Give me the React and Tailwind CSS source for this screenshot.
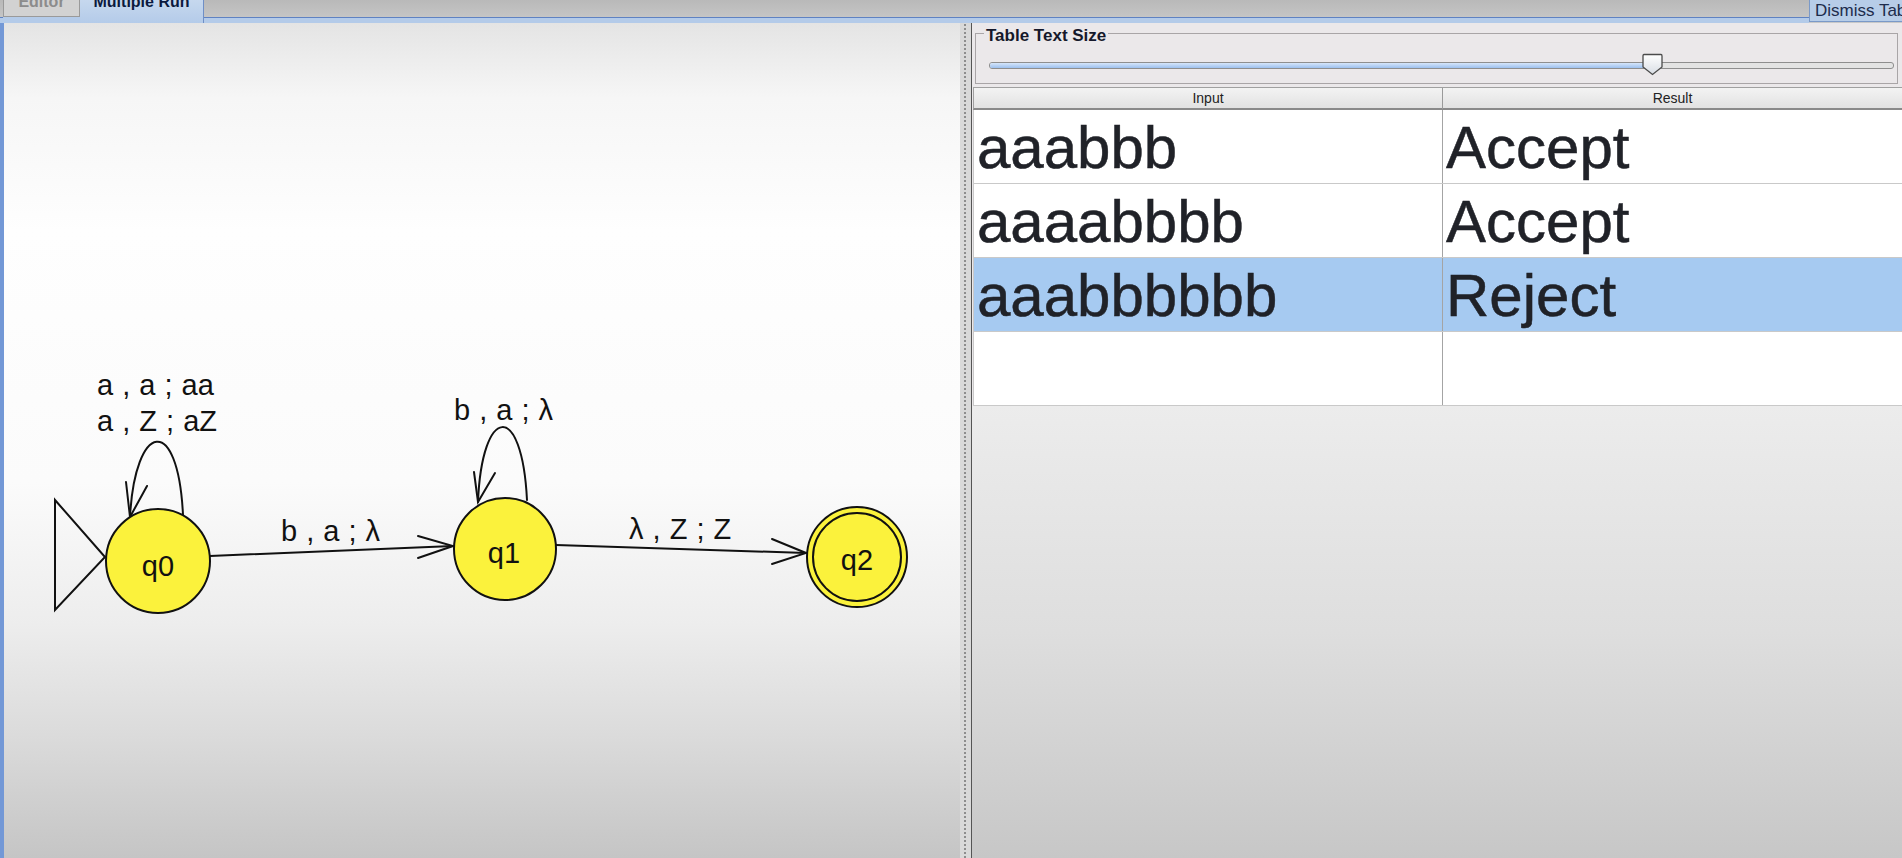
import React from 'react';

const rows = [
  { input: 'aaabbb', result: 'Accept' },
  { input: 'aaaabbbb', result: 'Accept' },
  { input: 'aaabbbbbb', result: 'Reject', selected: true },
  { input: '', result: '' },
];

function Diagram() {
  const line = { stroke: '#111', strokeWidth: 2, fill: 'none', strokeLinecap: 'round' };
  const label = {
    fontFamily: '"Liberation Sans", Arial, sans-serif',
    fontSize: 29,
    fill: '#111',
    wordSpacing: 1,
  };
  return (
    <svg
      className="absolute left-0 top-0"
      width="956"
      height="835"
      viewBox="4 23 956 835"
    >
      {/* start arrow */}
      <path d="M55 500 L105 557 L55 610 Z" fill="none" stroke="#111" strokeWidth="2" />

      {/* q0 self loop */}
      <path d="M183 515 C178 412 135 422 130 517" {...line} />
      <path d="M126 482 L130 517 L147 486" {...line} />
      <text x="97" y="395" {...label}>a , a ; aa</text>
      <text x="97" y="431" {...label}>a , Z ; aZ</text>

      {/* q0 -> q1 */}
      <path d="M210 556 L453 546" {...line} />
      <path d="M418 536 L453 546 L418 558" {...line} />
      <text x="281" y="541" {...label}>b , a ; λ</text>

      {/* q1 self loop */}
      <path d="M527 500 C522 400 482 405 478 502" {...line} />
      <path d="M474 472 L478 502 L495 473" {...line} />
      <text x="454" y="420" {...label}>b , a ; λ</text>

      {/* q1 -> q2 */}
      <path d="M556 545 L806 553" {...line} />
      <path d="M772 539 L806 553 L772 564" {...line} />
      <text x="629" y="539" {...label}>λ , Z ; Z</text>

      {/* states */}
      <circle cx="158" cy="561" r="52" fill="#fbf23c" stroke="#111" strokeWidth="2" />
      <text x="158" y="576" textAnchor="middle" {...label}>q0</text>

      <circle cx="505" cy="549" r="51" fill="#fbf23c" stroke="#111" strokeWidth="2" />
      <text x="504" y="563" textAnchor="middle" {...label}>q1</text>

      <circle cx="857" cy="557" r="50" fill="#fbf23c" stroke="#111" strokeWidth="2" />
      <circle cx="857" cy="557" r="44" fill="none" stroke="#111" strokeWidth="2" />
      <text x="857" y="570" textAnchor="middle" {...label}>q2</text>
    </svg>
  );
}

export default function App() {
  return (
    <div className="w-[1902px] h-[858px] overflow-hidden flex flex-col bg-[#c4c4c4] font-['Liberation_Sans',Arial,sans-serif]">
      {/* Tab strip */}
      <div className="h-[23px] flex bg-[linear-gradient(to_bottom,#b9b9b9,#c9c9c9)]">
        <div className="w-[3px] flex flex-col">
          <div className="h-[17px]" />
          <div className="flex-1 border-t border-[#5f82c2] bg-[#b4cbe9]" />
        </div>
        <div className="w-[77px] flex flex-col">
          <div className="h-[17px] overflow-hidden border-x border-b border-[#9a9a9a] bg-[#d2d2d2] flex justify-center">
            <span className="-mt-[6px] text-[16px] leading-[16px] font-bold text-[#8c8c8c]">Editor</span>
          </div>
          <div className="flex-1 bg-[#b4cbe9]" />
        </div>
        <div className="w-[124px] h-[23px] overflow-hidden border-r border-[#6f8fc6] bg-[linear-gradient(to_bottom,#c6d8ee,#b4cbe9)] flex justify-center">
          <span className="-mt-[6px] text-[16px] leading-[16px] font-bold text-[#0b1a3e]">Multiple Run</span>
        </div>
        <div className="flex-1 flex flex-col">
          <div className="h-[17px]" />
          <div className="flex-1 border-t border-[#5f82c2] bg-[#b4cbe9]" />
        </div>
        <div className="w-[93px] h-[22px] overflow-hidden whitespace-nowrap border-l border-b border-[#7a99c8] bg-[#b7cde8] pl-[5px] text-[17px] leading-[22px] text-[#1d2c4c]">
          Dismiss Tab
        </div>
      </div>

      {/* Main split */}
      <div className="flex-1 flex min-h-0">
        <div className="relative w-[960px] border-l-4 border-[#7398d6] bg-[linear-gradient(to_bottom,#e4e4e4_0%,#f6f6f6_9%,#fefefe_25%,#fbfbfb_55%,#ededed_72%,#dadada_86%,#c5c5c5_100%)]">
          <Diagram />
        </div>

        <div className="w-[12px] bg-[#d9d9d9] border-r border-[#555] flex justify-center">
          <div className="w-[5px] h-full bg-[radial-gradient(circle,#8d8d8d_1px,transparent_1.3px)] bg-[length:4px_4px]" />
        </div>

        <div className="flex-1 flex flex-col bg-[#ebe8ea]">
          {/* Table Text Size group */}
          <div className="relative ml-[3px] mr-[4px] mt-[10px] h-[51px] border border-[#a9a5a7]">
            <span className="absolute -top-[7px] left-[8px] px-[2px] bg-[#ebe8ea] text-[17px] leading-[18px] font-bold text-[#15182a]">
              Table Text Size
            </span>
            <div className="relative ml-[13px] w-[905px] mt-[20px] h-[22px] flex items-center">
              <div className="w-full h-[7px] rounded-[3px] border border-[#8e8e8e] bg-[#e3e3e3] overflow-hidden flex">
                <div className="w-[658px] h-full bg-[linear-gradient(to_bottom,#d6e6fa,#9dc0ee)] border-r border-[#6b8fc8]" />
              </div>
              <svg className="absolute left-[653px] -top-[1px]" width="21" height="23" viewBox="0 0 21 23">
                <defs>
                  <linearGradient id="thumb" x1="0" y1="0" x2="0" y2="1">
                    <stop offset="0" stopColor="#ffffff" />
                    <stop offset="1" stopColor="#d8dde4" />
                  </linearGradient>
                </defs>
                <path d="M2 1.5 H19 Q20 1.5 20 3 V14 L10.5 21.5 L1 14 V3 Q1 1.5 2 1.5 Z" fill="url(#thumb)" stroke="#4b4b4b" strokeWidth="1.3" />
              </svg>
            </div>
          </div>

          {/* Table */}
          <div className="mt-[3px] ml-[1px] flex flex-col">
            <div className="h-[23px] grid grid-cols-[469px_1fr] border-t border-l border-[#a0a0a0] border-b-2 border-b-[#8a8a8a] bg-[linear-gradient(to_bottom,#f3f3f3,#e2e2e2)] text-[14px] leading-[21px] text-[#222]">
              <div className="border-r border-[#9a9a9a] text-center">Input</div>
              <div className="text-center">Result</div>
            </div>
            {rows.map((row, i) => (
              <div
                key={i}
                className={
                  'h-[74px] grid grid-cols-[469px_1fr] border-l border-b border-[#c9c9c9] text-[60px] leading-[70px] text-[#202228] [-webkit-text-stroke:0.5px_#202228] ' +
                  (row.selected ? 'bg-[#a6caf1]' : 'bg-white')
                }
              >
                <div className="border-r border-[#a4a4a4] pl-[3px] pt-[3px] whitespace-nowrap">{row.input}</div>
                <div className="pl-[3px] pt-[3px] whitespace-nowrap">{row.result}</div>
              </div>
            ))}
          </div>
          <div className="flex-1 bg-[linear-gradient(to_bottom,#ececec,#dedede_50%,#c7c7c7)]" />
        </div>
      </div>
    </div>
  );
}
